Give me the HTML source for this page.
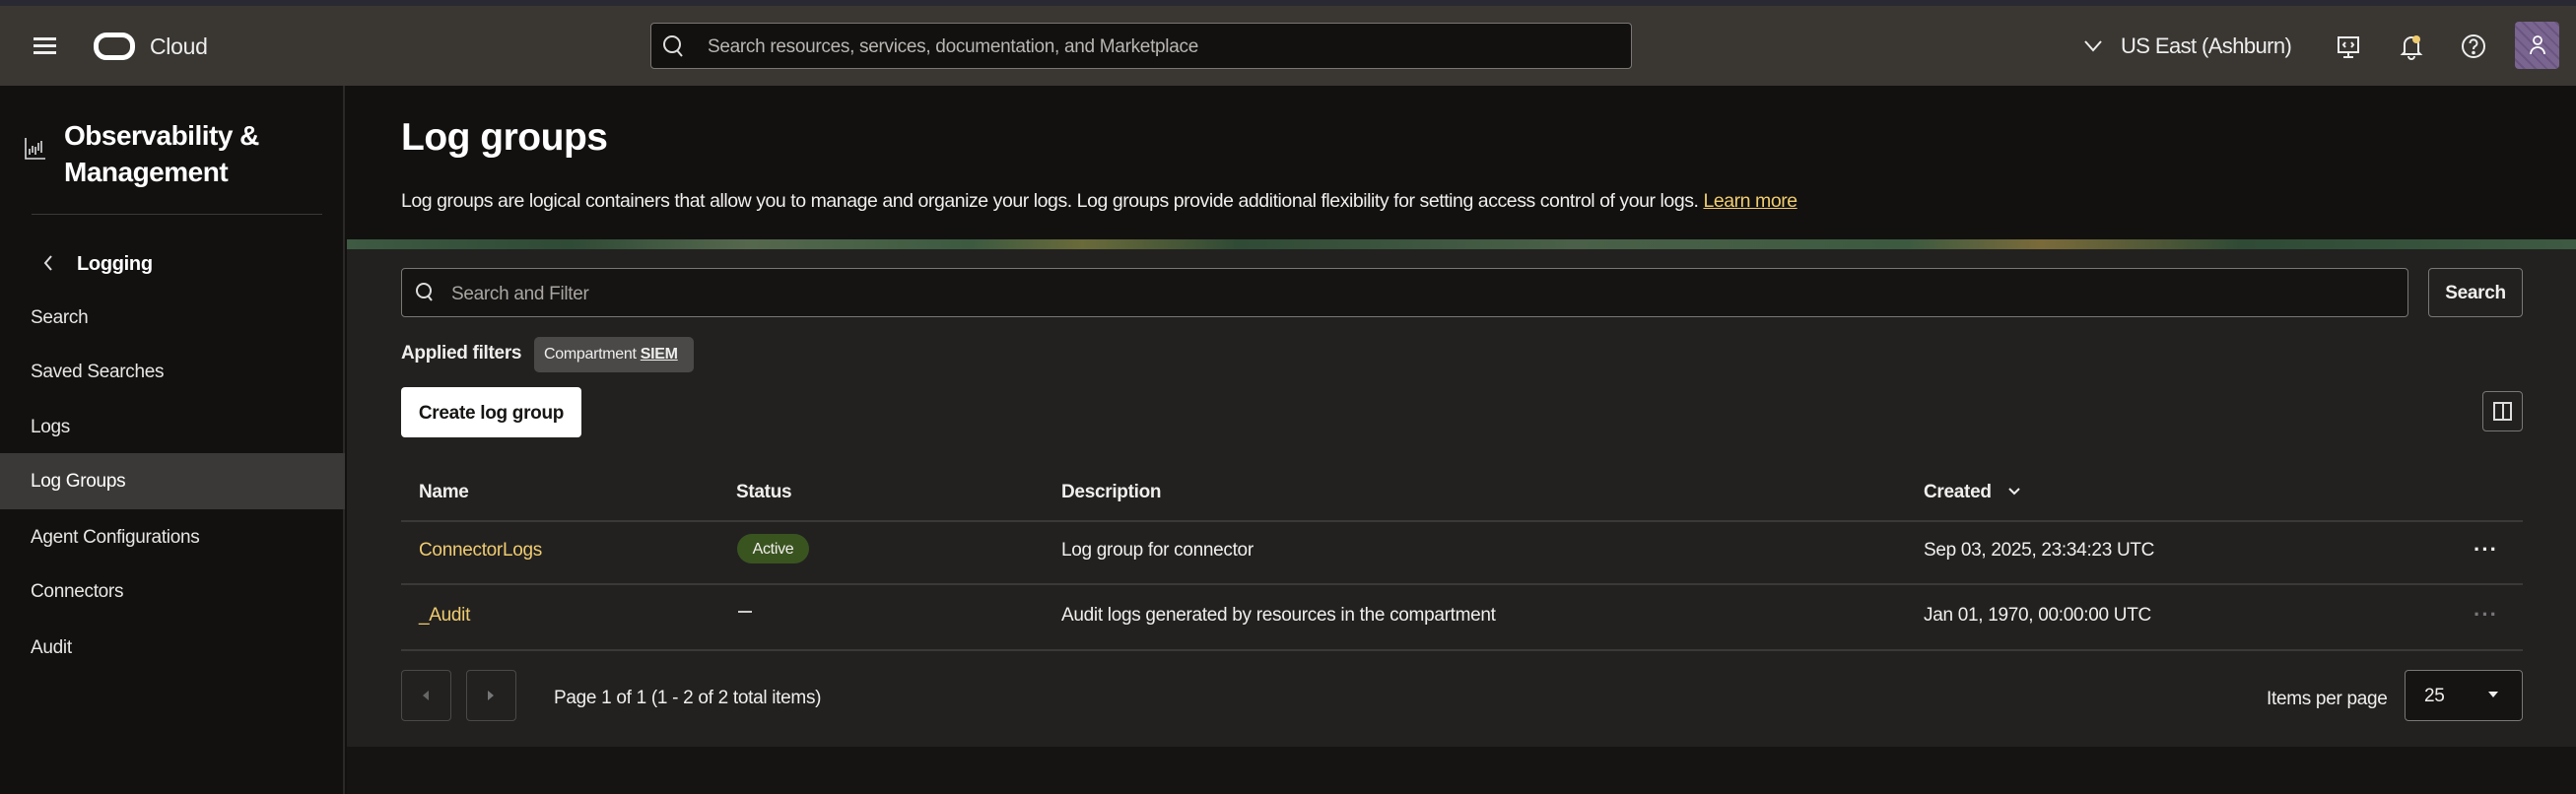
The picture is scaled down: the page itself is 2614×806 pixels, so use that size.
<!DOCTYPE html>
<html><head><meta charset="utf-8"><style>
*{box-sizing:border-box;margin:0;padding:0}
body{width:2614px;height:806px;overflow:hidden;background:#121110;font-family:"Liberation Sans",sans-serif;color:#f1efed;position:relative;letter-spacing:-0.3px}
.a{position:absolute}
.topbar{left:0;top:0;width:2614px;height:6px;background:#2a2933}
.hdr{left:0;top:6px;width:2614px;height:81px;background:#3a3733}
.side{left:0;top:87px;width:350px;height:719px;background:#121110;border-right:2px solid #2a2928}
.nav{left:31px;font-size:19px;color:#e9e7e4}
.panel{left:352px;top:253px;width:2262px;height:505px;background:#222120}
.banner{left:352px;top:243px;width:2262px;height:10px;background:linear-gradient(90deg,#3e5a42,#2f4a35 10%,#55684e 18%,#3c5a40 28%,#6a6a3a 33%,#2f4a35 40%,#4a6048 55%,#3c5a40 70%,#7a6a3a 76%,#2f4a35 85%,#3e5a42)}
.bottom{left:352px;top:758px;width:2262px;height:48px;background:#151413}
.th{top:489px;font-size:19px;font-weight:bold;color:#f1efed}
.td{font-size:19px;color:#f1efed}
.line{left:407px;width:2153px;height:2px;background:#3a3938}
</style></head><body>
<div class="a topbar"></div>
<div class="a hdr"></div>
<div class="a" style="left:34px;top:38px;width:23px;height:3px;background:#eee"></div>
<div class="a" style="left:34px;top:45px;width:23px;height:3px;background:#eee"></div>
<div class="a" style="left:34px;top:52px;width:23px;height:3px;background:#eee"></div>
<div class="a" style="left:95px;top:33px;width:42px;height:28px;border:5px solid #fff;border-radius:13px"></div>
<div class="a" style="left:152px;top:34px;font-size:23px;color:#eee">Cloud</div>
<div class="a" style="left:660px;top:23px;width:996px;height:47px;background:#121110;border:1px solid #7a7774;border-radius:4px"></div>
<svg class="a" style="left:672px;top:35px" width="24" height="26" viewBox="0 0 24 26"><circle cx="10" cy="10" r="8" fill="none" stroke="#ddd" stroke-width="2"/><line x1="15" y1="16" x2="20" y2="22" stroke="#ddd" stroke-width="2"/></svg>
<div class="a" style="left:718px;top:37px;font-size:19px;color:#b9b6b2">Search resources, services, documentation, and Marketplace</div>
<svg class="a" style="left:2114px;top:40px" width="20" height="14"><polyline points="2,2 10,11 18,2" fill="none" stroke="#eee" stroke-width="2"/></svg>
<div class="a" style="left:2152px;top:34px;font-size:22px;color:#eee;letter-spacing:-0.6px">US East (Ashburn)</div>
<svg class="a" style="left:2370px;top:35px" width="26" height="26" viewBox="0 0 26 26" fill="none" stroke="#eee" stroke-width="2"><rect x="3" y="3" width="20" height="15"/><line x1="13" y1="18" x2="13" y2="23"/><line x1="8" y1="23" x2="18" y2="23"/><polyline points="10,8 8,10.5 10,13"/><polyline points="16,8 18,10.5 16,13"/></svg>
<svg class="a" style="left:2434px;top:33px" width="26" height="28" viewBox="0 0 26 28" fill="none" stroke="#eee" stroke-width="2"><path d="M6 20V12a7 7 0 0 1 14 0v8l2 2H4z"/><path d="M10 24a3 3 0 0 0 6 0"/><circle cx="18" cy="7" r="4" fill="#f0cc70" stroke="none"/></svg>
<svg class="a" style="left:2497px;top:34px" width="26" height="26" viewBox="0 0 26 26" fill="none" stroke="#eee" stroke-width="2"><circle cx="13" cy="13" r="11"/><path d="M9.5 10a3.5 3.5 0 1 1 5 3c-1 .6-1.5 1.4-1.5 3"/><circle cx="13" cy="19.5" r=".8" fill="#eee"/></svg>
<div class="a" style="left:2552px;top:22px;width:45px;height:48px;background:repeating-linear-gradient(45deg,#7a6490 0 6px,#6a5580 6px 8px);border-radius:4px"></div>
<svg class="a" style="left:2564px;top:34px" width="22" height="24" viewBox="0 0 22 24" fill="none" stroke="#fff" stroke-width="1.8"><circle cx="11" cy="7" r="4"/><path d="M4 21a7 7 0 0 1 14 0"/></svg>

<div class="a side"></div>
<svg class="a" style="left:25px;top:139px" width="22" height="24" viewBox="0 0 22 24" fill="none" stroke="#ddd" stroke-width="1.6"><polyline points="1,1 1,22 21,22"/><path d="M5 18v-6M8 16V9M11 18v-8M14 14V6M17 16V4"/></svg>
<div class="a" style="left:65px;top:119px;font-size:28px;font-weight:bold;line-height:37px;color:#fff;letter-spacing:-0.5px">Observability &amp;<br>Management</div>
<div class="a" style="left:32px;top:217px;width:295px;height:1px;background:#3a3938"></div>
<svg class="a" style="left:43px;top:258px" width="12" height="18"><polyline points="9,2 3,9 9,16" fill="none" stroke="#ddd" stroke-width="2"/></svg>
<div class="a" style="left:78px;top:257px;font-size:20px;font-weight:bold;color:#fff">Logging</div>
<div class="a nav" style="top:312px">Search</div>
<div class="a nav" style="top:367px">Saved Searches</div>
<div class="a nav" style="top:423px">Logs</div>
<div class="a" style="left:0;top:460px;width:350px;height:57px;background:#3a3937"></div>
<div class="a nav" style="top:478px;color:#fff">Log Groups</div>
<div class="a nav" style="top:535px">Agent Configurations</div>
<div class="a nav" style="top:590px">Connectors</div>
<div class="a nav" style="top:647px">Audit</div>

<div class="a" style="left:407px;top:118px;font-size:39px;font-weight:bold;color:#fff;letter-spacing:-0.5px">Log groups</div>
<div class="a" style="left:407px;top:193px;font-size:19.5px;color:#f1efed;letter-spacing:-0.45px">Log groups are logical containers that allow you to manage and organize your logs. Log groups provide additional flexibility for setting access control of your logs. <span style="color:#f0cc70;text-decoration:underline">Learn more</span></div>
<div class="a banner"></div>
<div class="a panel"></div>
<div class="a bottom"></div>

<div class="a" style="left:407px;top:272px;width:2037px;height:50px;background:#151413;border:1px solid #7a7774;border-radius:4px"></div>
<svg class="a" style="left:420px;top:285px" width="24" height="26" viewBox="0 0 24 26"><circle cx="10" cy="10" r="7" fill="none" stroke="#ddd" stroke-width="2"/><line x1="14" y1="15" x2="18" y2="20" stroke="#ddd" stroke-width="2"/></svg>
<div class="a" style="left:458px;top:288px;font-size:19px;color:#a9a6a2">Search and Filter</div>
<div class="a" style="left:2464px;top:272px;width:96px;height:50px;border:1px solid #7a7774;border-radius:4px;font-size:19px;font-weight:bold;text-align:center;line-height:50px">Search</div>

<div class="a" style="left:407px;top:348px;font-size:19px;font-weight:bold">Applied filters</div>
<div class="a" style="left:542px;top:342px;width:162px;height:36px;background:#4a4947;border-radius:5px;font-size:16px;line-height:36px;padding-left:10px;color:#eee">Compartment <b style="text-decoration:underline">SIEM</b></div>
<div class="a" style="left:407px;top:393px;width:183px;height:51px;background:#fff;border-radius:4px;color:#161513;font-size:19px;font-weight:bold;text-align:center;line-height:53px">Create log group</div>
<div class="a" style="left:2519px;top:397px;width:41px;height:41px;border:1px solid #7a7774;border-radius:4px"></div>
<div class="a" style="left:2530px;top:408px;width:19px;height:19px;border:2px solid #ddd"></div>
<div class="a" style="left:2539px;top:408px;width:2px;height:19px;background:#ddd"></div>

<div class="a th" style="left:425px">Name</div>
<div class="a th" style="left:747px">Status</div>
<div class="a th" style="left:1077px">Description</div>
<div class="a th" style="left:1952px">Created</div>
<svg class="a" style="left:2037px;top:494px" width="14" height="10"><polyline points="2,2 7,7 12,2" fill="none" stroke="#eee" stroke-width="2"/></svg>
<div class="a line" style="top:528px"></div>
<div class="a td" style="left:425px;top:548px;color:#f0cc70">ConnectorLogs</div>
<div class="a" style="left:748px;top:542px;width:73px;height:30px;background:#3a5420;border-radius:15px;font-size:16px;line-height:31px;text-align:center">Active</div>
<div class="a td" style="left:1077px;top:548px">Log group for connector</div>
<div class="a td" style="left:1952px;top:548px">Sep 03, 2025, 23:34:23 UTC</div>
<div class="a" style="left:2510px;top:545px;font-size:22px;letter-spacing:1px;font-weight:bold">···</div>
<div class="a line" style="top:592px"></div>
<div class="a td" style="left:425px;top:614px;color:#f0cc70">_Audit</div>
<div class="a" style="left:749px;top:620px;width:14px;height:2px;background:#ccc"></div>
<div class="a td" style="left:1077px;top:614px">Audit logs generated by resources in the compartment</div>
<div class="a td" style="left:1952px;top:614px">Jan 01, 1970, 00:00:00 UTC</div>
<div class="a" style="left:2510px;top:611px;font-size:22px;letter-spacing:1px;font-weight:bold;color:#777">···</div>
<div class="a line" style="top:659px"></div>

<div class="a" style="left:407px;top:680px;width:51px;height:52px;border:1px solid #4a4947;border-radius:4px"></div>
<div class="a" style="left:473px;top:680px;width:51px;height:52px;border:1px solid #4a4947;border-radius:4px"></div>
<svg class="a" style="left:426px;top:698px" width="12" height="16"><polygon points="9,3 3,8 9,13" fill="#666"/></svg>
<svg class="a" style="left:492px;top:698px" width="12" height="16"><polygon points="3,3 9,8 3,13" fill="#777"/></svg>
<div class="a td" style="left:562px;top:698px">Page 1 of 1 (1 - 2 of 2 total items)</div>
<div class="a td" style="left:2300px;top:699px">Items per page</div>
<div class="a" style="left:2440px;top:680px;width:120px;height:52px;background:#151413;border:1px solid #7a7774;border-radius:4px"></div>
<div class="a td" style="left:2460px;top:696px">25</div>
<svg class="a" style="left:2524px;top:700px" width="12" height="10"><polygon points="1,2 11,2 6,8" fill="#eee"/></svg>
</body></html>
